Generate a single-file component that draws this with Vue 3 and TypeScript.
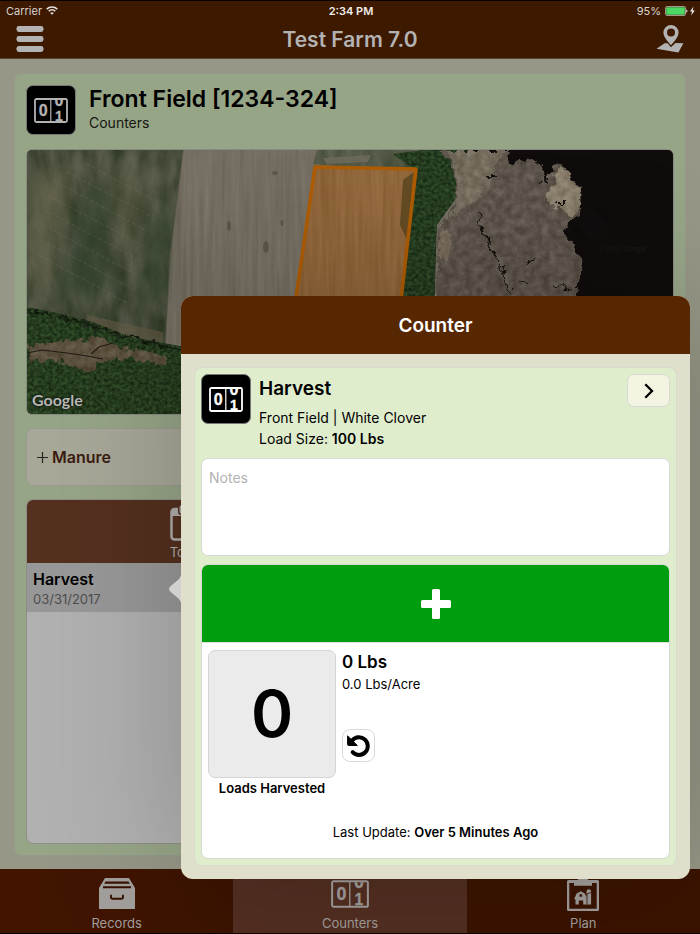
<script setup lang="ts">
import { ref, computed } from 'vue'

const loads = ref(0)
const loadSize = 100
const acres = 12
const notes = ref('')

const total = computed(() => `${loads.value * loadSize} Lbs`)
const rate = computed(() => `${((loads.value * loadSize) / acres).toFixed(1)} Lbs/Acre`)

function addLoad() {
  loads.value += 1
}
function undoLoad() {
  loads.value = Math.max(0, loads.value - 1)
}
</script>

<template>
  <div class="app">
    <svg class="defs" width="0" height="0" aria-hidden="true">
      <defs>
        <clipPath id="reel"><rect x="2" y="2" width="30" height="21.500" /></clipPath>
        <symbol id="counter" viewBox="0 0 34 25">
          <rect x="1" y="1" width="32" height="23" rx="1.500" fill="none" stroke="currentColor" stroke-width="1.800" />
          <path d="M16.800 1v23" stroke="currentColor" stroke-width="1.200" />
          <g clip-path="url(#reel)" fill="currentColor" stroke="currentColor" stroke-width=".3" font-family="Liberation Sans, sans-serif" font-weight="700" text-anchor="middle">
            <text x="9.300" y="18" font-size="16">0</text>
            <text x="25" y="7.500" font-size="16">0</text>
            <text x="25" y="22.500" font-size="14">1</text>
          </g>
        </symbol>
      </defs>
    </svg>

    <header class="topbar">
      <div class="status">
        <span class="carrier">Carrier
          <svg width="12" height="9" viewBox="0 0 12 9" fill="none" stroke="#e4e0dd" stroke-width="1.6">
            <path d="M.7 3.1a7.6 7.6 0 0 1 10.6 0M2.7 5.2a4.7 4.7 0 0 1 6.6 0" />
            <path d="M6 8.8 4.2 7a2.6 2.6 0 0 1 3.6 0z" fill="#e4e0dd" stroke="none" />
          </svg>
        </span>
        <span class="time">2:34 PM</span>
        <span class="battery">95%
          <svg width="31" height="10" viewBox="0 0 31 10">
            <rect x=".5" y=".5" width="20" height="9" rx="1.5" fill="none" stroke="#a3968c" />
            <rect x="1.2" y="1.2" width="18.6" height="7.6" rx="1" fill="#4bd763" />
            <path d="M21.3 3.2c1.6.4 1.6 3.2 0 3.6z" fill="#e4e0dd" />
            <path d="M28.6.6 25 5.6h2.1l-1 3.8 3.7-5h-2.2z" fill="#f2efed" />
          </svg>
        </span>
      </div>
      <div class="titlebar">
        <button class="plain" aria-label="Menu">
          <svg width="28" height="26" viewBox="0 0 28 26" fill="#b3b3b3">
            <rect width="27" height="6" x=".5" rx="2.4" /><rect width="27" height="6" x=".5" y="10" rx="2.4" /><rect width="27" height="6" x=".5" y="20" rx="2.4" />
          </svg>
        </button>
        <h1>Test Farm 7.0</h1>
        <button class="plain" aria-label="Map">
          <svg width="28" height="28" viewBox="0 0 28 28" fill="#b3b3b3">
            <path fill-rule="evenodd" d="M15 0a7.6 7.6 0 0 1 7.6 7.6c0 4.2-4.3 9-7.600 12.700C11.700 16.600 7.400 11.800 7.400 7.600A7.600 7.600 0 0 1 15 0zm0 3.600a4 4 0 1 0 0 8 4 4 0 0 0 0-8z" />
            <path d="M8.600 18.300h3L15 22.200l4.500-4.200 7.900.2-5 9.300L.5 23.800z" />
          </svg>
        </button>
      </div>
    </header>

    <main class="content">
      <section class="panel">
        <div class="field-head">
          <span class="tile dim"><svg width="34" height="25"><use href="#counter" /></svg></span>
          <div>
            <h2>Front Field [1234-324]</h2>
            <p>Counters</p>
          </div>
        </div>

        <div class="map">
          <svg viewBox="0 0 646 264" preserveAspectRatio="xMinYMin slice" role="img" aria-label="Satellite map of Front Field">
            <defs>
              <filter id="rows" x="0" y="0" width="1" height="1" color-interpolation-filters="sRGB">
                <feTurbulence type="fractalNoise" baseFrequency=".22 .012" numOctaves="3" seed="4" />
                <feColorMatrix values="1 0 0 0 0 1 0 0 0 0 1 0 0 0 0 0 0 0 0 1" result="n" />
                <feComposite in="SourceGraphic" in2="n" operator="arithmetic" k2="1" k3=".1" k4="-.04" />
                <feComposite in2="SourceGraphic" operator="in" />
              </filter>
              <filter id="patchy" x="0" y="0" width="1" height="1" color-interpolation-filters="sRGB">
                <feTurbulence type="fractalNoise" baseFrequency=".06 .025" numOctaves="5" seed="21" />
                <feColorMatrix values="1 0 0 0 0 .8 0 0 0 .1 .9 0 0 0 .05 0 0 0 0 1" result="n" />
                <feComposite in="SourceGraphic" in2="n" operator="arithmetic" k2="1" k3=".3" k4="-.15" />
                <feComposite in2="SourceGraphic" operator="in" />
              </filter>
              <filter id="trees" x="0" y="0" width="1" height="1" color-interpolation-filters="sRGB">
                <feTurbulence type="fractalNoise" baseFrequency=".27 .31" numOctaves="4" seed="8" />
                <feColorMatrix values=".7 0 0 0 .15 1 0 0 0 0 .6 0 0 0 .2 0 0 0 0 1" result="n" />
                <feComposite in="SourceGraphic" in2="n" operator="arithmetic" k2="1" k3=".28" k4="-.13" />
                <feComposite in2="SourceGraphic" operator="in" />
              </filter>
              <filter id="marsh" x="-.05" y="-.05" width="1.1" height="1.1" color-interpolation-filters="sRGB">
                <feTurbulence type="fractalNoise" baseFrequency=".13" numOctaves="4" seed="13" result="t" />
                <feDisplacementMap in="SourceGraphic" in2="t" scale="12" xChannelSelector="R" yChannelSelector="G" result="d" />
                <feColorMatrix in="t" values="1 0 0 0 0 1 0 0 0 0 1 0 0 0 0 0 0 0 0 1" result="n" />
                <feComposite in="d" in2="n" operator="arithmetic" k2="1" k3=".2" k4="-.09" />
                <feComposite in2="d" operator="in" />
              </filter>
              <filter id="soft"><feGaussianBlur stdDeviation="9" /></filter>
            </defs>
            <rect width="646" height="264" fill="#100c0b" />
            <path d="M0 0H430V264H0z" fill="#726b5f" filter="url(#rows)" />
            <path d="M0 0H156L143 105 138 200H0z" fill="#464c3a" filter="url(#patchy)" />
            <g filter="url(#soft)" opacity=".55">
              <path d="M58 25 95 40 80 150 20 145z" fill="#2d3f29" />
              <path d="M2 30 25 20 45 30 18 140 2 145z" fill="#767059" />
              <path d="M90 20 120 40 98 120 86 70z" fill="#666550" />
              <path d="M125 60 145 50 138 150 110 160z" fill="#34472f" />
              <path d="M30 8 140 22 140 30 30 22z" fill="#6a6954" />
            </g>
            <path d="M20 45 115 95M18 60 112 110M16 75 110 125M14 90 108 140M26 30 118 80M40 22 124 66M12 105 100 153M60 14 130 52" stroke="#84856c" stroke-width=".7" stroke-dasharray="4 2" opacity=".4" />
            <path d="M156 0 143 105 138 195" fill="none" stroke="#4d5040" stroke-width="1.500" opacity=".6" />
            <path d="M60 165 136 182 136 195 60 180z" fill="#655c48" opacity=".6" />
            <path d="M0 157 30 163 66 172 100 186 153 196 300 220V264H0z" fill="#233a1c" filter="url(#trees)" />
            <path d="M0 161 46 170 75 179 110 189 158 201" fill="none" stroke="#151d11" stroke-width="2.500" filter="url(#marsh)" />
            <path d="M0 196 25 192 50 190 78 188 84 196 140 205 140 216 105 208 75 211 62 222 45 218 25 209 0 212z" fill="#5a4f3d" filter="url(#marsh)" />
            <path d="M0 203 15 200 40 203 60 206 76 209M64 204 72 197 86 193" fill="none" stroke="#211c14" stroke-width="1.200" />
            <g fill="#3f3d34" opacity=".45"><ellipse cx="239" cy="97" rx="3" ry="6" /><ellipse cx="248" cy="23" rx="3" ry="2" /><ellipse cx="202" cy="76" rx="2" ry="5" /><ellipse cx="255" cy="73" rx="1.500" ry="3" /></g>
            <path d="M290 0H420V24L286 14z" fill="#545a47" filter="url(#patchy)" />
            <path d="M296 8 344 5 341 12 300 14z" fill="#756f60" opacity=".7" />
            <path d="M366 4 395 0H440L428 50 410 75 407 170H366L388 20z" fill="#233a1e" filter="url(#trees)" />
            <path d="M288 17 389 18 361 264H252z" fill="#8e6338" filter="url(#rows)" />
            <path d="M387 22 376 30 373 75 380 90z" fill="#4b3e17" opacity=".65" />
            <path d="M288 17 389 19 361 264H252z" fill="none" stroke="#ae5c02" stroke-width="3.500" stroke-linejoin="round" />
            <path d="M413 0H482L483 14 500 9 517 16 520 32 529 13 541 17 543 31 555 36 554 60 536 82 546 92 557 112 554 124 549 135 550 175H408L410 80 428 52 426 14z" fill="#5b5249" filter="url(#marsh)" />
            <path d="M419 0H482L468 14 464 38 440 58 420 70 430 46 428 16z" fill="#716a5b" filter="url(#marsh)" />
            <path d="M532 16 542 20 544 34 555 38 554 56 544 66 530 57 516 50 524 38z" fill="#857b68" filter="url(#marsh)" />
            <path d="M411 85 422 78 426 95 420 112 411 105z" fill="#766a59" filter="url(#marsh)" />
            <path d="M452 62 454 80 462 92 466 104 474 112 480 134 486 152M458 27H470M492 132 500 135M500 115 512 108M508 36 518 30M530 52H540M528 136 545 138" fill="none" stroke="#15110e" stroke-width="2" filter="url(#marsh)" />
            <path d="M550 60 580 90" stroke="#2c2b35" stroke-width="5" opacity=".35" filter="url(#soft)" />
            <text x="572" y="101" fill="#1d1a1b" font-size="7" font-family="Liberation Sans, sans-serif">© 2017 Google</text>
          </svg>
          <span class="google">Google</span>
        </div>

        <button class="manure">
          <svg width="11" height="11" viewBox="0 0 11 11" stroke="#2a2622" stroke-width="1.2"><path d="M5.500 0v11M0 5.500h11" /></svg>
          <span>Manure</span>
        </button>

        <div class="list">
          <div class="tabs">
            <button class="tab">
              <svg width="38" height="36" viewBox="0 0 38 36" fill="none" stroke="#b0adab">
                <rect x="1.500" y="4" width="35" height="30.500" rx="3" stroke-width="2.500" />
                <path d="M2 4h34v7H2z" fill="#b0adab" stroke="none" />
                <path d="M11 1v6M27 1v6" stroke="#54301f" stroke-width="6" stroke-linecap="round" />
                <path d="M11 2v5M27 2v5" stroke-width="3" stroke-linecap="round" />
              </svg>
              <span>Today</span>
            </button>
            <div class="tab-rest"></div>
          </div>
          <a class="row" href="#harvest">
            <strong>Harvest</strong>
            <span>03/31/2017</span>
          </a>
        </div>
      </section>
    </main>

    <nav class="nav">
      <a href="#records">
        <span class="icon">
          <svg width="36" height="31" viewBox="0 0 36 31">
            <path d="M6 0h24l6 10v21H0V10z" fill="#a39f9d" />
            <path d="M6.500 3.500h23l1.300 2.300H5.200zM4 8.300h28v2H4z" fill="#381200" />
            <path d="M12 17.500v1.500c0 1.200.7 1.800 1.800 1.800h8.400c1.100 0 1.800-.6 1.800-1.800v-1.500" fill="none" stroke="#381200" stroke-width="1.900" stroke-linecap="round" />
          </svg>
        </span>
        <span>Records</span>
      </a>
      <a href="#counters" class="active">
        <span class="icon"><svg width="38" height="28"><use href="#counter" /></svg></span>
        <span>Counters</span>
      </a>
      <a href="#plan">
        <span class="icon">
          <svg width="32" height="34" viewBox="0 0 32 34" fill="#a39f9d">
            <path fill-rule="evenodd" d="M1.500 3h29A1.500 1.500 0 0 1 32 4.500v28a1.500 1.500 0 0 1-1.500 1.500h-29A1.500 1.500 0 0 1 0 32.500v-28A1.500 1.500 0 0 1 1.500 3zM2.300 6v25.700h27.400V6z" />
            <path d="M7 8.800V6q0-1.500 2-1.600l1.500-.4Q11 .5 14 0h4q3 .5 3.500 4l1.500.4q2 .1 2 1.600v2.800z" />
            <path fill-rule="evenodd" d="M8.500 27.500v-5l-1.300-.6 2.400-5.400 4.200-2.300 4 2.300 1.700 3.800V14.600a2.300 2.300 0 0 1 4.600 0v12.900h-7.900v-4h-4.400v4zm4-10.300v2.600h2.600v-2.600z" />
            <path d="M19 17.300 24.500 15.300M20 17v10.500" stroke="#381200" stroke-width=".8" />
          </svg>
        </span>
        <span>Plan</span>
      </a>
    </nav>

    <section class="popover" role="dialog" aria-labelledby="pop-title">
      <svg class="pointer" width="13" height="28" viewBox="0 0 13 28"><path d="M13 0C12 6 1 10 1 14s11 8 12 14z" fill="#d1d1d0" /></svg>
      <header class="pop-head"><h2 id="pop-title">Counter</h2></header>
      <div class="pop-body">
        <div class="card">
          <div class="card-head">
            <span class="tile"><svg width="34" height="25"><use href="#counter" /></svg></span>
            <div class="card-text">
              <h3>Harvest</h3>
              <p>Front Field | White Clover</p>
              <p>Load Size: <b>100 Lbs</b></p>
            </div>
            <button class="go" aria-label="Open">
              <svg width="10" height="16" viewBox="0 0 10 16" fill="none" stroke="#000" stroke-width="2.300"><path d="M1.300 1.300 8 8l-6.700 6.700" /></svg>
            </button>
          </div>
          <textarea v-model="notes" placeholder="Notes" aria-label="Notes"></textarea>
          <div class="tally">
            <button class="add" aria-label="Add load" @click="addLoad">
              <svg width="30" height="30" viewBox="0 0 30 30" fill="#fff"><rect x="11" width="8" height="30" rx="1.500" /><rect y="11" width="30" height="8" rx="1.500" /></svg>
            </button>
            <div class="figures">
              <div class="count">
                <output>{{ loads }}</output>
                <b>Loads Harvested</b>
              </div>
              <div class="totals">
                <strong>{{ total }}</strong>
                <span>{{ rate }}</span>
                <button class="undo" aria-label="Undo" @click="undoLoad">
                  <svg width="23" height="22" viewBox="0 0 23 22"><path d="M5.200 5.500A8.800 8.800 0 1 1 5.600 17.200" fill="none" stroke="#000" stroke-width="4" stroke-linecap="round" /><path d="M.6.900V9.500q0 1 1 1h8.700z" fill="#000" stroke="#000" stroke-linejoin="round" /></svg>
                </button>
              </div>
            </div>
            <p class="updated">Last Update: <b>Over 5 Minutes Ago</b></p>
          </div>
        </div>
      </div>
    </section>
  </div>
</template>

<style>
body {
  margin: 0;
  background: #000;
}
</style>

<style scoped>
* {
  box-sizing: border-box;
}
h1, h2, h3, p {
  margin: 0;
  font-weight: 600;
}
p {
  font-weight: 400;
}
b, strong {
  font-weight: 600;
}
button {
  font: inherit;
  margin: 0;
  padding: 0;
  border: 0;
  background: none;
  color: inherit;
  cursor: pointer;
}
a {
  color: inherit;
  text-decoration: none;
}
svg {
  display: block;
}
.defs {
  position: absolute;
}
.app {
  position: relative;
  display: flex;
  flex-direction: column;
  min-height: 100vh;
  overflow: hidden;
  background: #979787;
  border: solid #0a0300;
  border-width: 1px 0;
  font-family: Inter, "Liberation Sans", sans-serif;
  font-size: 14px;
  color: #000;
}
.topbar {
  background: #3d1900;
  border-bottom: 1px solid #5c4633;
}
.status {
  display: grid;
  grid-template-columns: 1fr auto 1fr;
  align-items: center;
  height: 19px;
  padding: 0 4px 0 6px;
  font-size: 11px;
  color: #d8d3cf;
}
.carrier, .battery {
  display: flex;
  align-items: center;
  gap: 4px;
}
.battery {
  justify-content: flex-end;
}
.time {
  font-weight: 600;
  color: #f0edea;
}
.titlebar {
  display: flex;
  align-items: center;
  justify-content: space-between;
  height: 38px;
  padding: 0 16px;
}
.titlebar h1 {
  font-size: 21px;
  color: #b3b3b3;
}
.content {
  flex: 1;
  display: flex;
  padding: 14px 14px 13px;
}
.panel {
  flex: 1;
  min-width: 0;
  display: flex;
  flex-direction: column;
  padding: 11px;
  border: 1px solid #969a8b;
  border-radius: 7px;
  background: #97a587;
}
.field-head {
  display: flex;
  gap: 13px;
  margin-bottom: 14px;
}
.field-head h2 {
  font-size: 23px;
  line-height: 29px;
}
.field-head p {
  line-height: 17px;
  color: #141611;
}
.tile {
  flex: none;
  display: flex;
  align-items: center;
  justify-content: center;
  width: 50px;
  height: 50px;
  border: 1px solid #777;
  border-radius: 7px;
  background: #000;
  color: #fff;
}
.dim {
  color: #b3b3b3;
}
.map {
  position: relative;
  height: 266px;
  border: 1px solid #888a84;
  border-radius: 6px;
  overflow: hidden;
}
.map > svg {
  width: 100%;
  height: 100%;
}
.google {
  position: absolute;
  left: 5px;
  bottom: 4px;
  font: 700 16px/20px Lato, sans-serif;
  color: #b7b9b5;
  text-shadow: 0 0 2px #111, 0 0 2px #111;
}
.manure {
  display: flex;
  align-items: center;
  gap: 4px;
  height: 58px;
  margin: 13px 0;
  padding: 0 10px;
  border: 1px solid #999b92;
  border-radius: 7px;
  background: #a7a898;
  font-size: 16px;
  font-weight: 600;
  color: #3c1c10;
}
.list {
  flex: 1;
  border: 1px solid #8e8e88;
  border-radius: 7px;
  background: #b1b1b1;
  overflow: hidden;
}
.tabs {
  display: flex;
  height: 63px;
  background: #54301f;
}
.tab, .tab-rest {
  flex: 1;
}
.tab {
  display: flex;
  flex-direction: column;
  align-items: center;
  padding-top: 5px;
  font-size: 13px;
  line-height: 22px;
  color: #b0adab;
}
.row {
  display: flex;
  flex-direction: column;
  height: 49px;
  padding: 6px;
  background: #989898;
}
.row strong {
  font-size: 16px;
  line-height: 20px;
}
.row span {
  font-size: 13px;
  line-height: 20px;
  color: #4e4e4e;
}
.nav {
  display: grid;
  grid-template-columns: repeat(3, 1fr);
  height: 64px;
  background: linear-gradient(90deg, #431500, #3c1400 35%);
}
.nav a {
  display: flex;
  flex-direction: column;
  align-items: center;
  justify-content: space-between;
  padding-top: 7px;
  font-size: 13px;
  line-height: 20px;
  color: #a39f9d;
}
.icon {
  display: flex;
  align-items: center;
  height: 35px;
}
.nav .active {
  background: #542f22;
}
.popover {
  position: absolute;
  top: 295px;
  right: 10px;
  bottom: 54px;
  left: 181px;
  display: flex;
  flex-direction: column;
  border-radius: 12px;
  background: #e0dfcb;
  box-shadow: 0 0 140px rgba(0, 0, 0, 0.22);
}
.pointer {
  position: absolute;
  top: 279px;
  left: -13px;
}
.pop-head {
  display: flex;
  align-items: center;
  justify-content: center;
  height: 58px;
  border-radius: 12px 12px 0 0;
  background: #562700;
  color: #fff;
}
.pop-head h2 {
  font-size: 19px;
}
.pop-body {
  flex: 1;
  display: flex;
  padding: 13px;
}
.card {
  flex: 1;
  min-width: 0;
  display: flex;
  flex-direction: column;
  gap: 8px;
  padding: 6px;
  border: 1px solid #d6dacf;
  border-radius: 8px;
  background: #dfedcd;
}
.card-head {
  display: flex;
  align-items: flex-start;
  gap: 8px;
  height: 76px;
}
.card-text {
  flex: 1;
}
.card-text h3 {
  padding-bottom: 3px;
  font-size: 19px;
  line-height: 30px;
}
.card-text p {
  line-height: 21px;
}
.go {
  display: flex;
  align-items: center;
  justify-content: center;
  width: 43px;
  height: 33px;
  border: 1px solid #d9d9d4;
  border-radius: 7px;
  background: #f3f4e1;
}
textarea {
  display: block;
  height: 98px;
  padding: 10px 7px;
  border: 1px solid #d8dad6;
  border-radius: 7px;
  background: #fff;
  font: inherit;
  resize: none;
}
textarea::placeholder {
  color: #b2b2b2;
}
.tally {
  flex: 1;
  display: flex;
  flex-direction: column;
  border: 1px solid #d5d8d2;
  border-radius: 7px;
  background: #fff;
  overflow: hidden;
}
.add {
  display: flex;
  align-items: center;
  justify-content: center;
  height: 78px;
  border-bottom: 1px solid #dcdcdc;
  background: #009d0f;
}
.figures {
  display: flex;
  gap: 6px;
  padding: 7px 6px 0;
}
.count {
  display: flex;
  flex-direction: column;
  align-items: center;
  font-size: 13px;
  line-height: 20px;
}
output {
  display: flex;
  align-items: center;
  justify-content: center;
  width: 128px;
  height: 128px;
  border: 1px solid #d5d5d5;
  border-radius: 7px;
  background: #ebebeb;
  font-size: 64px;
  font-weight: 600;
}
.totals {
  display: flex;
  flex-direction: column;
  align-items: flex-start;
  font-size: 13px;
  line-height: 20px;
}
.totals strong {
  font-size: 17px;
  line-height: 24px;
}
.undo {
  display: flex;
  align-items: center;
  justify-content: center;
  width: 33px;
  height: 33px;
  margin-top: 35px;
  border: 1px solid #d9d9d9;
  border-radius: 8px;
}
.updated {
  margin-top: auto;
  padding-bottom: 16px;
  font-size: 13px;
  line-height: 20px;
  text-align: center;
}
</style>
